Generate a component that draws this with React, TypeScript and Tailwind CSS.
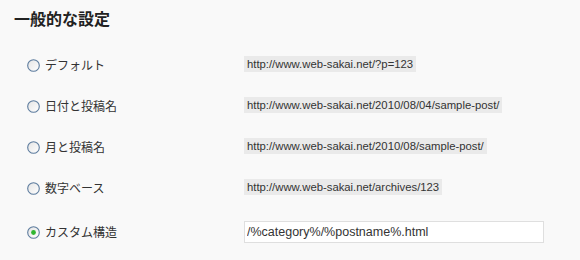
const options = [
  { label: 'デフォルト', url: 'http://www.web-sakai.net/?p=123' },
  { label: '日付と投稿名', url: 'http://www.web-sakai.net/2010/08/04/sample-post/' },
  { label: '月と投稿名', url: 'http://www.web-sakai.net/2010/08/sample-post/' },
  { label: '数字ベース', url: 'http://www.web-sakai.net/archives/123' },
];

function Radio({ checked }: { checked?: boolean }) {
  return (
    <svg width="13" height="13" viewBox="0 0 13 13" className="shrink-0">
      <defs>
        <linearGradient id={checked ? 'rg-on' : 'rg-off'} x1="0" y1="0" x2="1" y2="1">
          <stop offset="0" stopColor="#e4e4e4" />
          <stop offset="1" stopColor="#ffffff" />
        </linearGradient>
      </defs>
      <circle cx="6.5" cy="6.5" r="5.8" fill={`url(#${checked ? 'rg-on' : 'rg-off'})`} stroke="#5d7c9e" strokeWidth="1.1" />
      {checked && <circle cx="6.5" cy="6.5" r="2.4" fill="#2fb52f" />}
    </svg>
  );
}

export default function App() {
  return (
    <div className="h-[260px] w-[580px] bg-[#f9f9f9] pl-[14px] pt-[9px] text-[#333] font-['Liberation_Sans','Noto_Sans_CJK_JP',sans-serif]">
      <h2 className="text-[16px] font-bold leading-[19px] text-[#222] font-['Noto_Sans_CJK_JP',sans-serif]">一般的な設定</h2>

      <div className="mt-[28px] pl-[13px]">
        {options.map((o) => (
          <div key={o.label} className="flex h-[41px] items-start">
            <label className="flex w-[217px] items-center gap-[5px] pt-[2px]">
              <Radio />
              <span className="text-[12px] leading-[14px] font-['Noto_Sans_CJK_JP',sans-serif]">{o.label}</span>
            </label>
            <code className="bg-[#eaeaea] px-[3px] text-[11.3px] leading-[16px] font-['Liberation_Sans',sans-serif]">{o.url}</code>
          </div>
        ))}
        <div className="mt-[1px] flex items-center">
          <label className="flex w-[217px] items-center gap-[5px]">
            <Radio checked />
            <span className="text-[12px] leading-[14px] font-['Noto_Sans_CJK_JP',sans-serif]">カスタム構造</span>
          </label>
          <input
            readOnly
            value="/%category%/%postname%.html"
            className="h-[22px] w-[300px] border border-[#dfdfdf] bg-white px-[2px] text-[12.5px] text-[#333] outline-none font-['Liberation_Sans',sans-serif]"
          />
        </div>
      </div>
    </div>
  );
}
